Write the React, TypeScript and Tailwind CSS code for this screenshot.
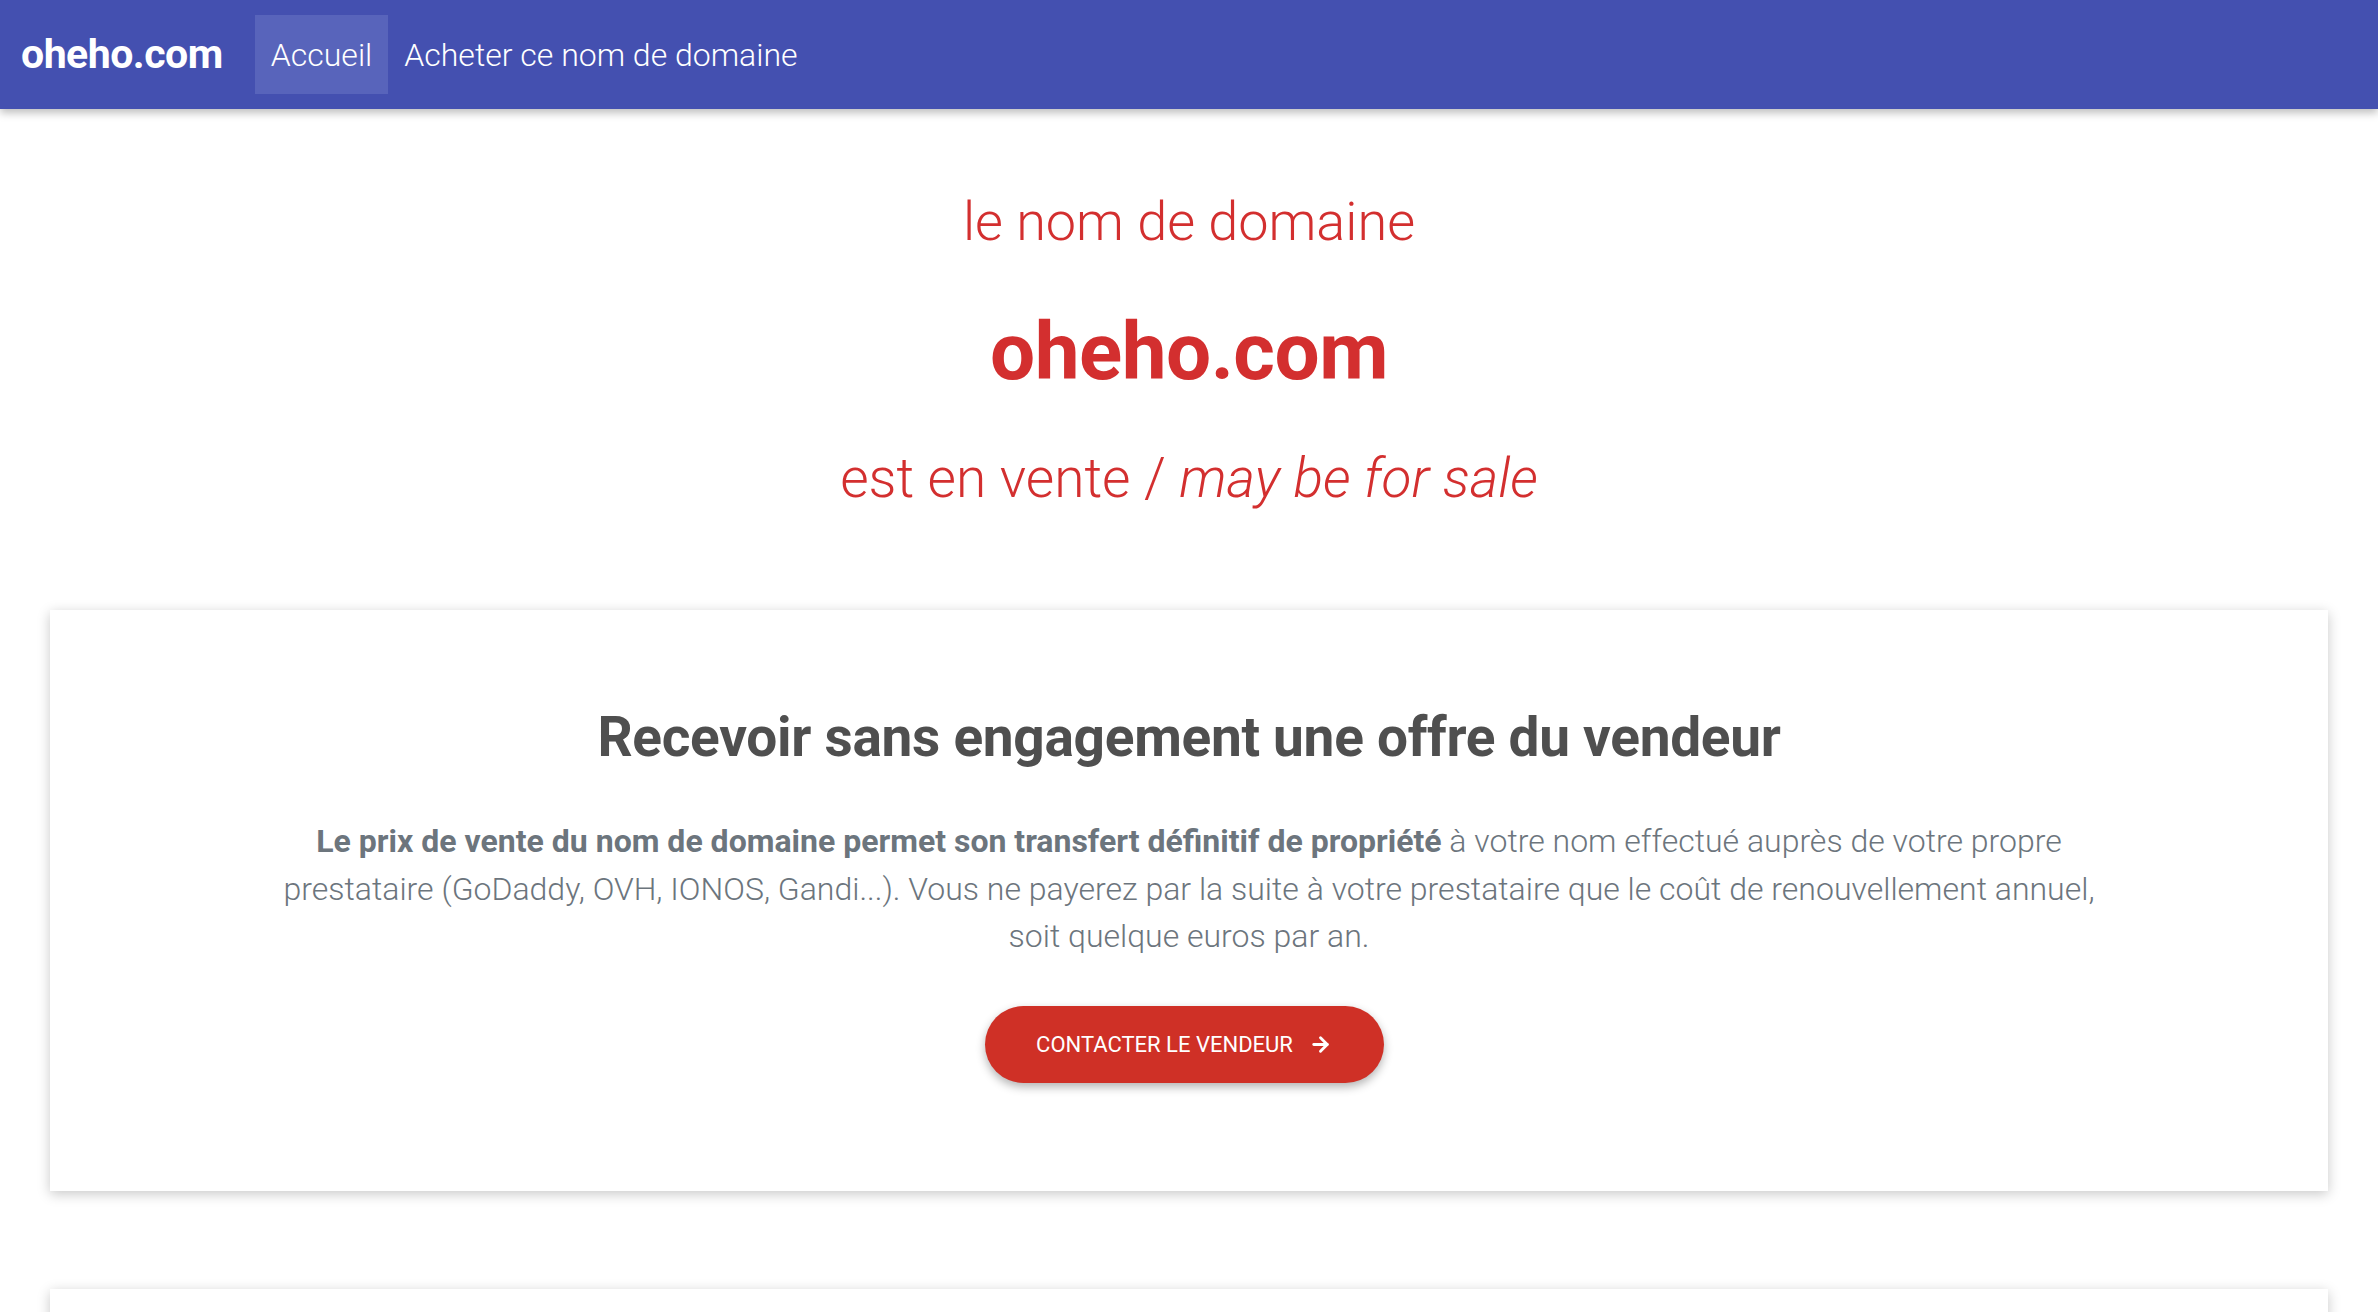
import { ArrowRight } from "lucide-react";

const font = { fontFamily: "Roboto, 'Liberation Sans', sans-serif" };

function Navbar() {
  return (
    <nav className="h-[109px] bg-[#4450b0] flex items-center px-[21px] shadow-[0_4px_8px_rgba(0,0,0,0.25)] relative z-10">
      <a className="text-white text-[41px] font-bold tracking-[-0.5px] mr-[32px]">oheho.com</a>
      <ul className="flex items-center">
        <li className="h-[79px] flex items-center px-[16px] bg-[#5864bb] text-white text-[32px] font-light">
          Accueil
        </li>
        <li className="h-[79px] flex items-center px-[16px] text-white text-[32px] font-light">
          Acheter ce nom de domaine
        </li>
      </ul>
    </nav>
  );
}

function Hero() {
  return (
    <header className="text-center text-[#d32f2f] pt-[79px] pb-[98px]">
      <p className="text-[54px] font-light leading-[67px]">le nom de domaine</p>
      <h1 className="text-[80px] font-bold leading-[96px] mt-[49px] tracking-[-0.5px]">oheho.com</h1>
      <p className="text-[55px] font-light leading-[67px] mt-[45px]">
        est en vente / <em className="italic">may be for sale</em>
      </p>
    </header>
  );
}

function OfferCard() {
  return (
    <section className="mx-[50px] bg-white shadow-[0_3px_12px_rgba(0,0,0,0.22)] pt-[96px] pb-[108px] px-[40px] text-center">
      <h2 className="text-[55px] font-bold leading-[62px] text-[#4f4f4f] tracking-[-0.3px]">
        Recevoir sans engagement une offre du vendeur
      </h2>
      <p className="mt-[50px] mx-auto max-w-[1840px] text-[32px] leading-[47.5px] font-light text-[#6c757d]">
        <strong className="font-bold">
          Le prix de vente du nom de domaine permet son transfert définitif de propriété
        </strong>{" "}
        à votre nom effectué auprès de votre propre prestataire (GoDaddy, OVH, IONOS, Gandi...). Vous ne
        payerez par la suite à votre prestataire que le coût de renouvellement annuel, soit quelque euros par an.
      </p>
      <div className="mt-[45px] pr-[10px]">
        <button className="h-[77px] w-[399px] rounded-full bg-[#cf3026] text-white text-[22px] font-normal uppercase inline-flex items-center justify-center gap-[16px] shadow-[0_4px_10px_rgba(0,0,0,0.3)]">
          Contacter le vendeur
          <ArrowRight size={23} strokeWidth={3} />
        </button>
      </div>
    </section>
  );
}

export default function App() {
  return (
    <div className="min-h-screen bg-white" style={font}>
      <Navbar />
      <Hero />
      <main className="pb-[98px]">
        <OfferCard />
        <section className="mx-[50px] mt-[98px] h-[300px] bg-white shadow-[0_3px_12px_rgba(0,0,0,0.22)]" />
      </main>
    </div>
  );
}
